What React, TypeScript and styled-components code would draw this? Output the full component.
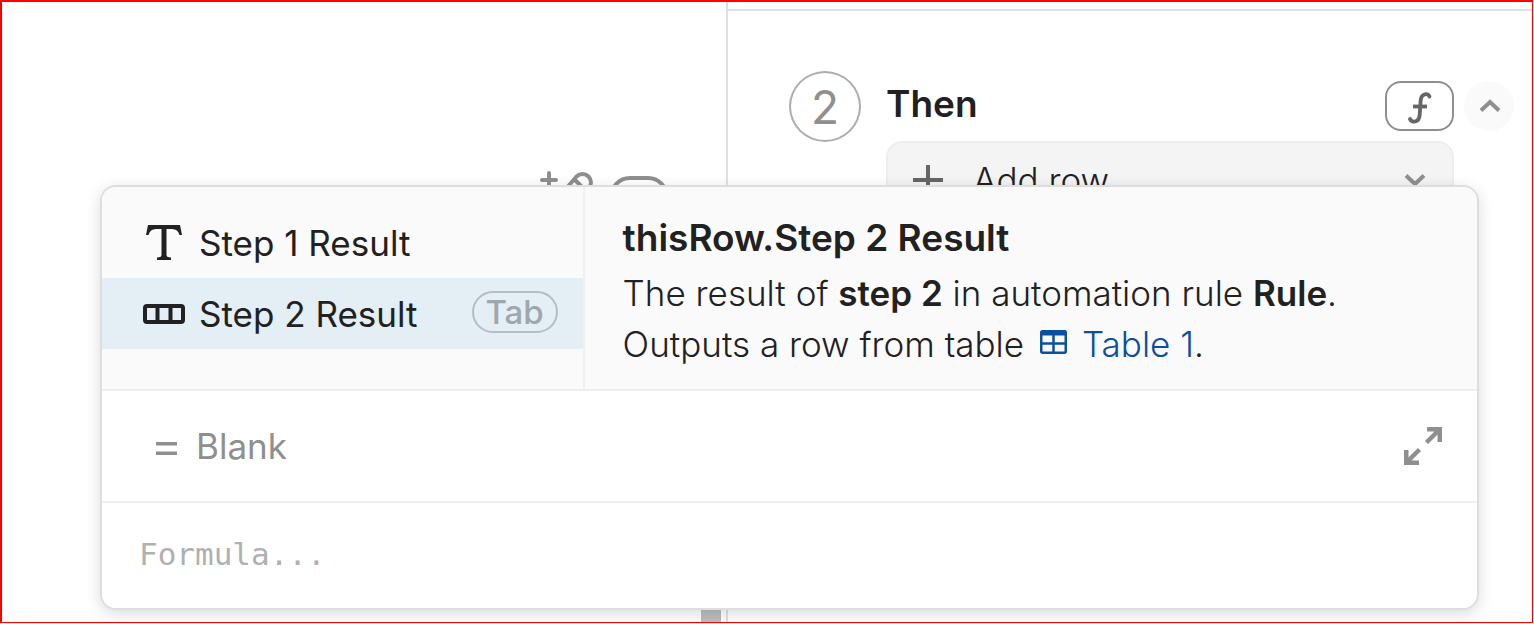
import React from "react";
import styled, { createGlobalStyle, css } from "styled-components";

const GlobalStyle = createGlobalStyle`
  *, *::before, *::after { box-sizing: border-box; }
  body {
    margin: 0;
    background: #ffffff;
    color: #212121;
    font-family: Inter, "Liberation Sans", sans-serif;
    font-size: 35px;
  }
  button, input { font: inherit; color: inherit; }
`;

const Frame = styled.div`
  position: relative;
  display: flex;
  min-height: calc(100vh - 1px);
  margin: 0 1px 1px 0;
  border: 1px solid #ff0000;
  border-width: 2px 1px 1px 2px;
  background: #ffffff;
  overflow: hidden;
`;

const Canvas = styled.main`
  flex: 724 1 0;
  display: flex;
  flex-direction: column;
  justify-content: space-between;
  align-items: flex-end;
  padding-top: 166px;
`;

const CanvasTools = styled.div`
  display: flex;
  gap: 14px;
  padding-right: 57px;
`;

const ScrollThumb = styled.div`
  width: 20px;
  height: 24px;
  margin-right: 5px;
  background: #bdbdbd;
`;

const SidePanel = styled.aside`
  flex: 804 1 0;
  border-left: 2px solid #e0e0e0;
  padding-top: 7px;
`;

const StepSection = styled.section`
  display: flex;
  align-items: flex-start;
  gap: 25px;
  border-top: 2px solid #e0e0e0;
  padding: 60px 18px 0 61px;
`;

const StepNumber = styled.div`
  display: flex;
  align-items: center;
  justify-content: center;
  flex: none;
  width: 72px;
  height: 71px;
  border: 2px solid #adadad;
  border-radius: 50%;
  color: #8f8f8f;
  font-size: 46px;
`;

const StepBody = styled.div`
  flex: 1;
`;

const StepHeader = styled.header`
  display: flex;
  align-items: center;
  gap: 10px;
  height: 70px;
`;

const StepTitle = styled.h2`
  flex: 1;
  margin: 0 0 4px;
  font-size: 37px;
  line-height: 48px;
  font-weight: 600;
`;

const iconButton = css`
  display: flex;
  align-items: center;
  justify-content: center;
  flex: none;
  padding: 0;
  border: 0;
  background: transparent;
  cursor: pointer;
`;

const FormulaButton = styled.button`
  ${iconButton}
  width: 69px;
  height: 50px;
  padding-top: 4px;
  border: 2px solid #8f8f8f;
  border-radius: 16px;
  background: #ffffff;
`;

const CollapseButton = styled.button`
  ${iconButton}
  width: 50px;
  height: 50px;
  padding-left: 2px;
  border-radius: 50%;
  background: #fafafa;
`;

const ActionPicker = styled.button`
  display: flex;
  align-items: center;
  width: calc(100% - 60px);
  height: 77px;
  padding: 0 26px 0 24px;
  border: 2px solid #eeeeee;
  border-radius: 16px;
  background: #f4f4f4;
  font-weight: 300;
  text-align: left;
  cursor: pointer;
`;

const ActionLabel = styled.span`
  flex: 1;
  padding-left: 29px;
`;

const Popup = styled.div`
  position: absolute;
  top: 183px;
  left: 98px;
  right: 53px;
  border: 2px solid #dedede;
  border-radius: 16px;
  background: #ffffff;
  box-shadow: 0 4px 16px rgba(0, 0, 0, 0.14);
  overflow: hidden;
`;

const Suggestions = styled.div`
  display: flex;
  border-bottom: 2px solid #eeeeee;
  background: #fafafa;
`;

const SuggestionList = styled.div`
  flex: none;
  width: 35.1%;
  padding: 20px 0 40px;
  border-right: 2px solid #f0f0f0;
`;

const SuggestionItem = styled.button<{ $active?: boolean }>`
  display: flex;
  align-items: center;
  width: 100%;
  height: 71px;
  padding: 0 25px 0 40px;
  border: 0;
  background: ${(p) => (p.$active ? "#e3eef5" : "transparent")};
  text-align: left;
  cursor: pointer;
`;

const SuggestionLabel = styled.span`
  flex: 1;
  padding-left: 13px;
  white-space: nowrap;
`;

const KeyHint = styled.kbd`
  width: 86px;
  height: 42px;
  margin-bottom: 3px;
  border: 2px solid #b4bdc4;
  border-radius: 21px;
  color: #a0a6ae;
  font-family: inherit;
  font-size: 33px;
  line-height: 38px;
  font-weight: 500;
  text-align: center;
`;

const Details = styled.div`
  flex: 1;
  padding: 25px 38px 0;
`;

const DetailsTitle = styled.h3`
  margin: 0 0 5px;
  font-size: 37px;
  line-height: 51px;
  font-weight: 600;
`;

const DetailsText = styled.p`
  margin: 0;
  line-height: 51px;
  font-weight: 300;
  white-space: nowrap;

  b { font-weight: 600; }
`;

const TableLink = styled.a`
  color: #0b4f9e;
  text-decoration: none;

  svg { margin: 0 15px 3px 6px; }
`;

const ResultRow = styled.div`
  display: flex;
  align-items: center;
  height: 112px;
  padding: 0 31px 0 52px;
  border-bottom: 2px solid #eeeeee;
  color: #8f8f8f;
`;

const ResultValue = styled.span`
  flex: 1;
  padding-left: 18px;
`;

const ExpandButton = styled.button`
  ${iconButton}
  width: 46px;
  height: 46px;
`;

const FormulaInput = styled.input`
  display: block;
  width: 100%;
  height: 105px;
  padding: 0 37px 3px;
  border: 0;
  outline: 0;
  background: #ffffff;
  font-family: "DejaVu Sans Mono", monospace;
  font-size: 31px;

  &::placeholder { color: #b0b0b0; opacity: 1; }
`;

const WandIcon = () => (
  <svg width="56" height="56" viewBox="0 0 56 56" fill="none" stroke="#8f8f8f" strokeWidth="4" strokeLinecap="round">
    <path d="M10 5v14M3 12h14" />
    <path d="M13 37L37.500 8.500a8 8 0 0 1 12 12L26 49a8 8 0 0 1-13-12z M36 12l10 10" />
  </svg>
);

const PillIcon = () => (
  <svg width="60" height="56" viewBox="0 0 60 56" fill="none" stroke="#8f8f8f" strokeWidth="4">
    <rect x="2" y="10" width="56" height="38" rx="19" />
  </svg>
);

const FunctionIcon = () => (
  <svg width="26" height="34" viewBox="0 0 26 34" fill="none" stroke="#666666" strokeWidth="3.800" strokeLinecap="round">
    <path d="M22.500 5.500C21 2 14.500 2 13.700 9L12.700 24C12 32 4.500 32 3 28" />
    <path d="M6 15.500H20" strokeLinecap="butt" />
  </svg>
);

const Chevron = ({ up }: { up?: boolean }) => (
  <svg width="22" height="14" viewBox="0 0 22 14" fill="none" stroke="#8f8f8f" strokeWidth="4">
    <path d={up ? "M2 11.500L11 3L20 11.500" : "M2 2.500L11 11L20 2.500"} />
  </svg>
);

const PlusIcon = () => (
  <svg width="32" height="32" viewBox="0 0 32 32" fill="none" stroke="#666666" strokeWidth="4">
    <path d="M16 1v30M1 16h30" />
  </svg>
);

const TextTypeIcon = () => (
  <svg width="44" height="36" viewBox="0 0 44 36" fill="#212121">
    <path d="M6 0H38L40 10H37.500Q36 4 30 4H24.500V30Q24.500 32.500 29 32.500V35H15V32.500Q19.500 32.500 19.500 30V4H14Q8 4 6.500 10H4Z" />
  </svg>
);

const RowTypeIcon = () => (
  <svg width="44" height="22" viewBox="0 0 44 22" fill="none" stroke="#212121" strokeWidth="4">
    <rect x="3" y="3" width="38" height="16" rx="2" />
    <path d="M15.500 3v16M28.500 3v16" />
  </svg>
);

const TableIcon = () => (
  <svg width="27" height="24" viewBox="0 0 27 24" fill="none" stroke="currentColor" strokeWidth="2.500">
    <rect x="1.250" y="1.250" width="24.500" height="21.500" rx="1.500" />
    <path d="M1 3H26" strokeWidth="5" />
    <path d="M1 13.500H26M13.500 3V23" />
  </svg>
);

const EqualsIcon = () => (
  <svg width="24" height="20" viewBox="0 0 24 20" fill="#8f8f8f">
    <path d="M2 6H23V9.500H2ZM2 15.500H23V19H2Z" />
  </svg>
);

const ExpandIcon = () => (
  <svg width="38" height="38" viewBox="0 0 38 38" fill="none" stroke="#8f8f8f" strokeWidth="4.500">
    <path d="M23 2.250H35.750V15M35.750 2.250L22.500 15.500" />
    <path d="M2.250 23V35.750H15M2.250 35.750L15.500 22.500" />
  </svg>
);

export default function App() {
  return (
    <>
      <GlobalStyle />
      <Frame>
        <Canvas>
          <CanvasTools>
            <WandIcon />
            <PillIcon />
          </CanvasTools>
          <ScrollThumb />
        </Canvas>
        <SidePanel>
          <StepSection>
            <StepNumber>2</StepNumber>
            <StepBody>
              <StepHeader>
                <StepTitle>Then</StepTitle>
                <FormulaButton aria-label="Use a formula">
                  <FunctionIcon />
                </FormulaButton>
                <CollapseButton aria-label="Collapse step">
                  <Chevron up />
                </CollapseButton>
              </StepHeader>
              <ActionPicker>
                <PlusIcon />
                <ActionLabel>Add row</ActionLabel>
                <Chevron />
              </ActionPicker>
            </StepBody>
          </StepSection>
        </SidePanel>

        <Popup>
          <Suggestions>
            <SuggestionList>
              <SuggestionItem>
                <TextTypeIcon />
                <SuggestionLabel>Step 1 Result</SuggestionLabel>
              </SuggestionItem>
              <SuggestionItem $active>
                <RowTypeIcon />
                <SuggestionLabel>Step 2 Result</SuggestionLabel>
                <KeyHint>Tab</KeyHint>
              </SuggestionItem>
            </SuggestionList>
            <Details>
              <DetailsTitle>thisRow.Step 2 Result</DetailsTitle>
              <DetailsText>
                The result of <b>step 2</b> in automation rule <b>Rule</b>.<br />
                Outputs a row from table{" "}
                <TableLink href="#table-1">
                  <TableIcon />
                  Table 1
                </TableLink>
                .
              </DetailsText>
            </Details>
          </Suggestions>
          <ResultRow>
            <EqualsIcon />
            <ResultValue>Blank</ResultValue>
            <ExpandButton aria-label="Expand editor">
              <ExpandIcon />
            </ExpandButton>
          </ResultRow>
          <FormulaInput aria-label="Formula" placeholder="Formula..." />
        </Popup>
      </Frame>
    </>
  );
}
